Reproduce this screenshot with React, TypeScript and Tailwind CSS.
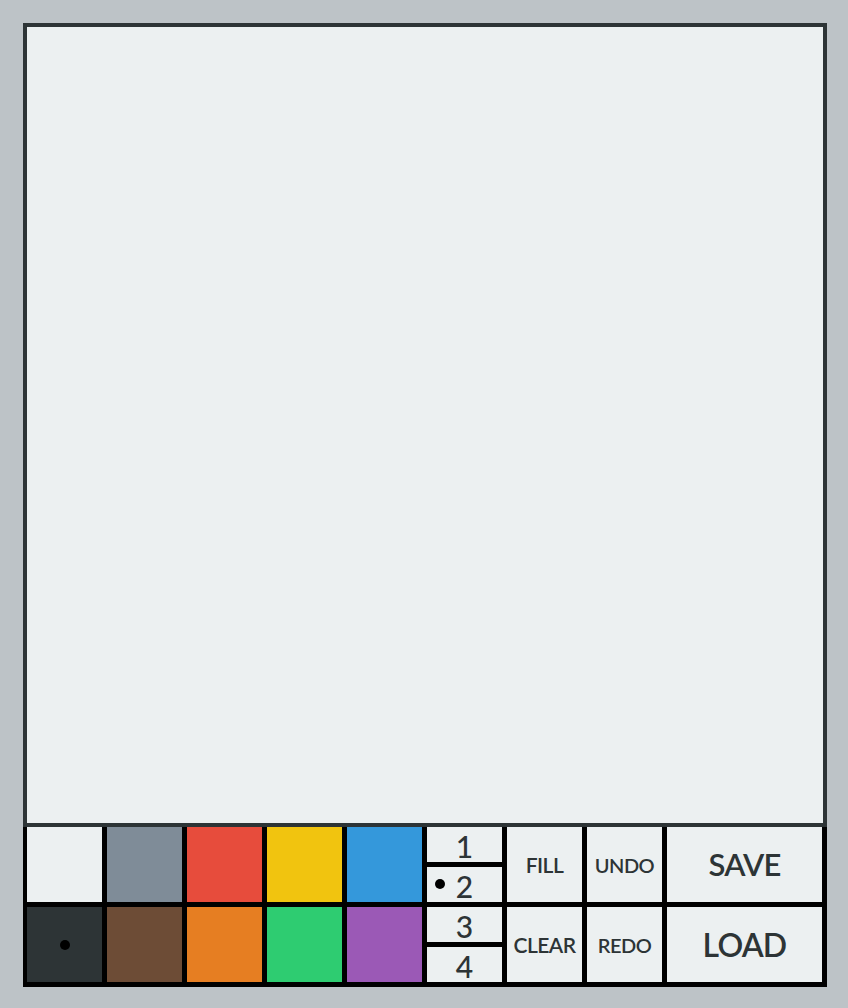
const top = ["#ecf0f1", "#7f8c98", "#e74c3c", "#f1c40f", "#3498db"];
const bottom = ["#2d3436", "#6d4c36", "#e67e22", "#2ecc71", "#9b59b6"];

function Dot() {
  return <span className="absolute w-[10px] h-[10px] rounded-full bg-black" />;
}

function Swatch({ color, active }: { color: string; active?: boolean }) {
  return (
    <div className="relative flex items-center justify-center" style={{ backgroundColor: color }}>
      {active && <Dot />}
    </div>
  );
}

function Size({ n, active }: { n: number; active?: boolean }) {
  return (
    <div className="relative h-[35px] bg-[#ecf0f1] flex items-center justify-center text-[30px] font-medium leading-none pt-[3px]">
      {active && <span className="absolute left-[8px] top-[12px] w-[10px] h-[10px] rounded-full bg-black" />}
      {n}
    </div>
  );
}

function Btn({ label, size }: { label: string; size: string }) {
  return (
    <div className={`bg-[#ecf0f1] flex items-center justify-center ${size}`}>{label}</div>
  );
}

export default function App() {
  return (
    <div
      className="w-full h-[1008px] bg-[#bdc3c7] pt-[23px] pl-[23px] text-[#2d3436]"
      style={{ fontFamily: "Lato, 'Noto Sans', sans-serif" }}
    >
      <div className="w-[804px] h-[804px] border-4 border-[#2d3436] bg-[#ecf0f1]" />
      <div className="w-[804px] bg-black grid grid-cols-[repeat(8,75px)_155px] grid-rows-[75px_75px] gap-[5px] pl-[4px] pr-[5px] pb-[5px]">
        {top.map((c) => (
          <Swatch key={c} color={c} />
        ))}
        <div className="flex flex-col gap-[5px]">
          <Size n={1} />
          <Size n={2} active />
        </div>
        <Btn label="FILL" size="text-[21px] font-semibold tracking-tight" />
        <Btn label="UNDO" size="text-[20px] font-semibold tracking-tight" />
        <Btn label="SAVE" size="text-[31px] font-semibold tracking-tight" />
        {bottom.map((c, i) => (
          <Swatch key={c} color={c} active={i === 0} />
        ))}
        <div className="flex flex-col gap-[5px]">
          <Size n={3} />
          <Size n={4} />
        </div>
        <Btn label="CLEAR" size="text-[21px] font-semibold tracking-tight" />
        <Btn label="REDO" size="text-[20px] font-semibold tracking-tight" />
        <Btn label="LOAD" size="text-[32px] font-semibold tracking-tight" />
      </div>
    </div>
  );
}
